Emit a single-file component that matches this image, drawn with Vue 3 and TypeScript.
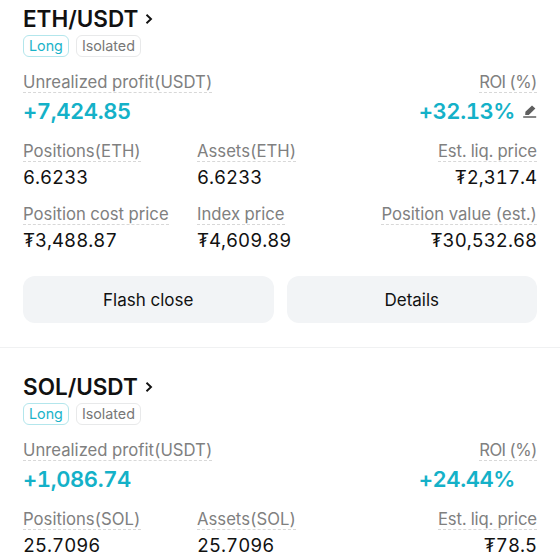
<script setup lang="ts">
interface Cell { label: string; value: string; tight?: boolean }
interface Position {
  pair: string; profit: string; roi: string; edit: boolean;
  rows: Cell[][]; actions: boolean;
}
const positions: Position[] = [
  {
    pair: 'ETH/USDT', profit: '+7,424.85', roi: '+32.13%', edit: true, actions: true,
    rows: [
      [{ label: 'Positions(ETH)', value: '6.6233' }, { label: 'Assets(ETH)', value: '6.6233' }, { label: 'Est. liq. price', value: '₮2,317.4', tight: true }],
      [{ label: 'Position cost price', value: '₮3,488.87' }, { label: 'Index price', value: '₮4,609.89' }, { label: 'Position value (est.)', value: '₮30,532.68' }],
    ],
  },
  {
    pair: 'SOL/USDT', profit: '+1,086.74', roi: '+24.44%', edit: false, actions: false,
    rows: [
      [{ label: 'Positions(SOL)', value: '25.7096' }, { label: 'Assets(SOL)', value: '25.7096' }, { label: 'Est. liq. price', value: '₮78.5', tight: true }],
    ],
  },
];
</script>

<template>
  <div class="page">
    <section v-for="p in positions" :key="p.pair" class="card">
      <div class="title">
        <span>{{ p.pair }}</span>
        <svg class="chev" width="10" height="12" viewBox="0 0 10 12"><path d="M2.500 1.800 7 6l-4.500 4.200" fill="none" stroke="#111" stroke-width="1.900" /></svg>
      </div>
      <div class="tags">
        <span class="tag long">Long</span>
        <span class="tag iso">Isolated</span>
      </div>
      <div class="summary">
        <div class="col">
          <span class="label">Unrealized profit(USDT)</span>
          <span class="big">{{ p.profit }}</span>
        </div>
        <div class="col end">
          <span class="label roi-label">ROI (%)</span>
          <span class="big">{{ p.roi }}<svg class="pen" :class="{ hidden: !p.edit }" width="15" height="13" viewBox="0 0 15 13"><path d="M10 .6 13.400 3.400 6.800 10H3.200L3.400 6.800zM1.200 11.200H14.200v1.500H1.200z" fill="#5f5f5f" /></svg></span>
        </div>
      </div>
      <div class="rows">
        <div v-for="(row, i) in p.rows" :key="i" class="grid">
          <div v-for="(c, j) in row" :key="c.label" class="col" :class="{ end: j === 2 }">
            <span class="label" :class="{ tight: c.tight }">{{ c.label }}</span>
            <span class="val">{{ c.value }}</span>
          </div>
        </div>
      </div>
      <div v-if="p.actions" class="actions">
        <button class="btn">Flash close</button>
        <button class="btn">Details</button>
      </div>
    </section>
  </div>
</template>

<style>
html, body { background: #fff; margin: 0; overflow: hidden; }
</style>

<style scoped>
.page {
  width: 560px;
  height: 560px;
  overflow: hidden;
  font-family: Inter, "Liberation Sans", sans-serif;
  color: #111;
  font-variant-numeric: tabular-nums;
}
.card {
  margin-top: -20px;
  padding: 27px 23px 24px;
  border-bottom: 1px solid #f0f1f2;
}
.card + .card { margin-top: 0; }
.title {
  display: flex;
  align-items: center;
  gap: 6px;
  height: 24px;
  font-size: 22.5px;
  font-weight: 600;
  line-height: 24px;
}
.tags {
  display: flex;
  gap: 7px;
  margin-top: 4px;
}
.tag {
  height: 22px;
  padding: 0 5px;
  font-size: 14.3px;
  line-height: 20px;
  border-radius: 6px;
  box-sizing: border-box;
}
.long { color: #1ab3c9; border: 1px solid #b3e6ec; }
.iso { color: #777; border: 1px solid #e8e9ea; }
.summary {
  display: flex;
  justify-content: space-between;
  margin-top: 15px;
}
.col {
  display: flex;
  flex-direction: column;
  align-items: flex-start;
}
.end { align-items: flex-end; margin-left: auto; }
.label {
  font-size: 16.7px;
  line-height: 20px;
  color: #808080;
  border-bottom: 1px dashed #d8d8d8;
}
.tight { letter-spacing: -0.1px; }
.roi-label { letter-spacing: -0.6px; }
.big {
  display: flex;
  align-items: center;
  margin-top: 4px;
  font-size: 22px;
  line-height: 28px;
  font-weight: 600;
  letter-spacing: -0.4px;
  color: #14b1c8;
}
.pen { margin-left: 7px; }
.hidden { visibility: hidden; }
.rows {
  display: flex;
  flex-direction: column;
  gap: 14px;
  margin-top: 16px;
}
.grid {
  display: grid;
  grid-template-columns: 174px 1fr 1fr;
}
.val {
  margin-top: 2px;
  font-size: 18.6px;
  line-height: 26px;
  color: #111;
}
.actions {
  display: flex;
  gap: 13px;
  margin-top: 23px;
}
.btn {
  flex: 1;
  height: 47px;
  border: 0;
  border-radius: 12px;
  background: #f2f4f6;
  font: 400 17px Inter, "Liberation Sans", sans-serif;
  color: #111;
}
</style>
